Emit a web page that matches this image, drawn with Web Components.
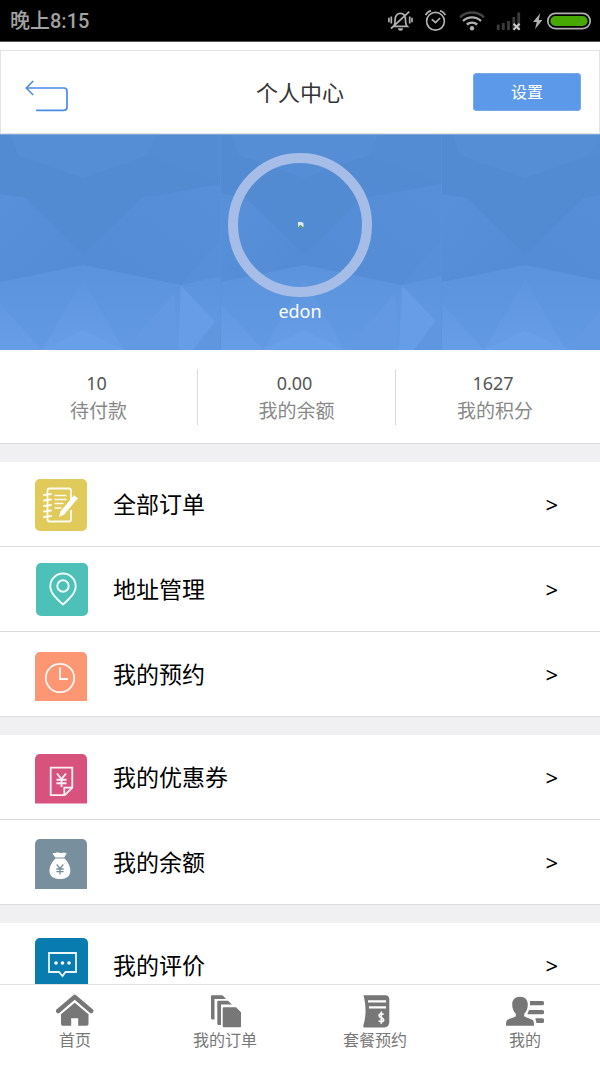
<!DOCTYPE html>
<html lang="zh-CN">
<head>
<meta charset="utf-8">
<meta name="viewport" content="width=device-width, initial-scale=1">
<title>个人中心</title>
<style>
  html, body { margin: 0; height: 100%; }
  body {
    font-family: "Noto Sans", "Noto Sans CJK SC", sans-serif;
    color: #000;
    background: #fff;
    --blue: #5d99e9;
    --line: #dcdcdc;
    --band: #f0f0f2;
  }
</style>
</head>
<body>
<app-shell>
  <status-bar slot="top" time="晚上8:15"></status-bar>
  <page-header heading="个人中心" action="设置"></page-header>
  <profile-hero name="edon"></profile-hero>
  <stat-row>
    <stat-item value="10">待付款</stat-item>
    <stat-item value="0.00">我的余额</stat-item>
    <stat-item value="1627">我的积分</stat-item>
  </stat-row>
  <menu-group>
    <menu-row icon="orders">全部订单</menu-row>
    <menu-row icon="address">地址管理</menu-row>
    <menu-row icon="booking">我的预约</menu-row>
  </menu-group>
  <menu-group>
    <menu-row icon="coupon">我的优惠券</menu-row>
    <menu-row icon="balance">我的余额</menu-row>
  </menu-group>
  <menu-group>
    <menu-row icon="review">我的评价</menu-row>
  </menu-group>
  <tab-bar slot="bottom">
    <tab-item icon="home">首页</tab-item>
    <tab-item icon="files">我的订单</tab-item>
    <tab-item icon="bill">套餐预约</tab-item>
    <tab-item icon="user">我的</tab-item>
  </tab-bar>
</app-shell>

<script>
const define = (name, render) => customElements.define(name, class extends HTMLElement {
  connectedCallback() {
    if (this.shadowRoot) return;
    this.attachShadow({ mode: 'open' }).innerHTML = render(this);
  }
});

define('app-shell', () => `
  <style>
    :host { display: flex; flex-direction: column; height: 100vh; }
    main { flex: 1; min-height: 0; overflow-y: auto; scrollbar-width: none; }
  </style>
  <slot name="top"></slot>
  <main><slot></slot></main>
  <slot name="bottom"></slot>`);

define('status-bar', el => `
  <style>
    :host { display: flex; align-items: center; justify-content: space-between; flex: none;
      height: 41px; padding: 0 8px 0 10px; background: #000; color: #a2a2a2;
      border-bottom: 1px solid #555; }
    time { font: 500 20px/28px Roboto, "Noto Sans CJK SC", sans-serif; }
    svg { display: block; }
  </style>
  <time>${el.getAttribute('time')}</time>
  <svg width="204" height="24" viewBox="0 0 204 24" fill="none" stroke="#b0b0b0" stroke-width="1.7" aria-hidden="true">
    <path d="M5.5 17.3c1.4-1.3 1.6-3 1.6-6.500 0-4 2.200-6.400 5.200-6.400s5.200 2.400 5.200 6.400c0 3.500.2 5.200 1.700 6.500zM3 19.500L21.300 2.700M3.300 7.500v7M.9 8.800v4.400M21.700 7.500v7M24 8.800v4.400"/>
    <path d="M10 19.300h5a2.500 2.500 0 0 1-5 0z" fill="#b0b0b0" stroke="none"/>
    <circle cx="47.500" cy="12.300" r="8.900"/>
    <path d="M43.800 10.300l3.700 3.200 4.600-4.500M37.600 6.200c1-2.200 2.800-3.800 5.400-4.600M57.400 6.200c-1-2.200-2.800-3.800-5.400-4.600"/>
    <path d="M72 8.300a17.500 17.500 0 0 1 24 0" stroke="#444" stroke-width="2.400"/>
    <path d="M75 12a13 13 0 0 1 18 0M78.800 15.500a8 8 0 0 1 10.400 0" stroke-width="2.400"/>
    <circle cx="84" cy="19.300" r="2.200" fill="#b0b0b0" stroke="none"/>
    <path d="M110.200 21v-5.500M115.300 21v-7M120.500 21v-9M125.800 21V8M130.700 21V3.500" stroke="#3b3b3b" stroke-width="2.800"/>
    <path d="M125.600 14.800l6 6M131.600 14.800l-6 6" stroke="#ccc" stroke-width="2"/>
    <path d="M152.300 4.300l-7.300 8.700h3.800l-1.800 7.300 7.400-9.300h-3.700z" fill="#b0b0b0" stroke="none"/>
    <rect x="159.800" y="4.400" width="42.400" height="15.200" rx="7.600"/>
    <rect x="162.400" y="7" width="37.200" height="10" rx="5" fill="#47a804" stroke="none"/>
  </svg>`);

define('page-header', el => `
  <style>
    :host { display: block; padding-top: 8px; background: #fff; }
    header { display: grid; grid-template-columns: 1fr auto 1fr; align-items: center;
      height: 82px; padding: 0 18px; border: 1px solid #e3e3e3; }
    a, svg { display: block; }
    a { justify-self: start; }
    h1 { margin: 0; font-size: 22px; line-height: 32px; font-weight: 400; color: #333; }
    button { justify-self: end; width: 108px; height: 38px; padding: 0; border: 1px solid #78abed;
      border-radius: 3px; background: var(--blue); color: #fff; font: inherit; font-size: 16px; line-height: 24px; }
  </style>
  <header>
    <a href="#back" aria-label="返回">
      <svg width="52" height="40" viewBox="0 0 52 40" fill="none" stroke="#4a8be6" stroke-width="1.700" stroke-linecap="round" stroke-linejoin="round">
        <path d="M13.700 9.500L7.200 16l6.500 6.500M7.200 16H45a3 3 0 0 1 3 3v16.300a3 3 0 0 1-3 3H17.800"/>
      </svg>
    </a>
    <h1>${el.getAttribute('heading')}</h1>
    <button type="button">${el.getAttribute('action')}</button>
  </header>`);

define('profile-hero', el => `
  <style>
    :host { display: flex; flex-direction: column; align-items: center; position: relative;
      padding: 19px 0 25px; background: #538cd4; color: #fff; }
    .facets { position: absolute; inset: 0; width: 100%; height: 100%; }
    .avatar { position: relative; box-sizing: border-box; display: grid; place-items: center;
      width: 144px; height: 144px; border: 10px solid #a5bde7; border-radius: 50%; }
    .name { position: relative; font-size: 18px; line-height: 28px; }
  </style>
  <svg class="facets" aria-hidden="true">
    <defs>
      <linearGradient id="low" x1="0" y1="0" x2="0" y2="1"><stop offset="0" stop-color="#5b94dd"/><stop offset="1" stop-color="#6199e2"/></linearGradient>
      <linearGradient id="left" x1="0" y1="0" x2="1" y2="1"><stop offset="0" stop-color="#5891da"/><stop offset="1" stop-color="#538cd5"/></linearGradient>
      <linearGradient id="right" x1="1" y1="0" x2="0" y2="1"><stop offset="0" stop-color="#5790d9"/><stop offset="1" stop-color="#538cd5"/></linearGradient>
      <linearGradient id="spike" x1="0" y1="0" x2="0" y2="1"><stop offset="0" stop-color="#5e96df"/><stop offset="1" stop-color="#669de6"/></linearGradient>
      <pattern id="tile" width="221" height="216" patternUnits="userSpaceOnUse">
        <rect width="221" height="216" fill="#538bd3"/>
        <path d="M11 0H157L148 21 83 44 18 21z" fill="#568ed6"/>
        <path d="M157 0H221V49L148 21z" fill="#548cd4"/>
        <path d="M0 60L25 64 83 121V131L0 148z" fill="url(#left)"/>
        <path d="M221 50L142 64 83 121V131L181 151 221 142z" fill="url(#right)"/>
        <path d="M221 105L181 151 221 142z" fill="#5790d9"/>
        <path d="M0 148L83 131 181 151 221 142V216H0z" fill="url(#low)"/>
        <path d="M0 170L42 216H0zM83 146L124 216 83 196 42 216z" fill="url(#spike)"/>
        <path d="M42 216L83 196 124 216z" fill="#689fe8"/>
        <path d="M124 216L174 160 178 216z" fill="#6299e2"/>
        <path d="M181 152L215 187 193 216H178z" fill="#669de6"/>
        <path d="M215 187L221 192V216H193z" fill="#5f96de"/>
        <path d="M220.500 0V216" stroke="#5b93da" stroke-opacity=".7"/>
      </pattern>
    </defs>
    <rect width="100%" height="100%" fill="url(#tile)"/>
    <rect width="100%" height="1" fill="#7ca8df"/>
  </svg>
  <div class="avatar">
    <svg width="8" height="8" viewBox="0 0 8 8" role="img" aria-label="头像">
      <path d="M2 1h4l1.500 1.500V6H2z" fill="#dfe9f4"/><path d="M2 5l3-1 2.500 3H5z" fill="#55a04c"/>
    </svg>
  </div>
  <div class="name">${el.getAttribute('name')}</div>`);

define('stat-row', () => `
  <style>
    :host { display: flex; padding: 19px 0 18px; background: #fff; border-bottom: 1px solid var(--line); }
    ::slotted(*) { flex: 0 0 33%; }
    ::slotted(:not(:last-child)) { border-right: 1px solid var(--line); }
  </style>
  <slot></slot>`);

define('stat-item', el => `
  <style>
    :host { display: block; box-sizing: border-box; text-align: center; line-height: 28px; }
    .value { padding-right: 4px; font-size: 18px; color: #555; }
    .label { font-size: 19px; color: #888; }
  </style>
  <div class="value">${el.getAttribute('value')}</div>
  <div class="label"><slot></slot></div>`);

define('menu-group', () => `
  <style>
    :host { display: block; border-top: 18px solid var(--band); background: #fff; }
  </style>
  <slot></slot>`);

const line = 'fill="none" stroke="#fff" stroke-opacity=".92"';
const menuIcons = {
  orders: `<path d="M5 2h42a5 5 0 0 1 5 5v42a5 5 0 0 1-5 5H5a5 5 0 0 1-5-5V7a5 5 0 0 1 5-5z" fill="#e0ca59"/>
    <path d="M36 23V13.500a2 2 0 0 0-2-2H14.500a2 2 0 0 0-2 2v29a2 2 0 0 0 2 2H34a2 2 0 0 0 2-2V33" ${line} stroke-width="1.800"/>
    <path d="M9 18l7-1M9 23.500l7-1M9 29l7-1M9 34.500l7-1M9 40l7-1" ${line} stroke-width="1.900" stroke-linecap="round"/>
    <path d="M19.500 18.500h12M19.500 22.500h12M19.500 26.500h9M19.500 31h7" ${line} stroke-width="1.700"/>
    <path d="M39 18.200l4 3-14 16.500-5 2.300 1.500-5.500z" fill="#fff"/>`,
  address: `<rect x="1" y="1" width="52" height="53" rx="5" fill="#4dc1b7"/>
    <path d="M28 42.500C22.500 37.500 15.300 31.500 15.300 24.200a12.700 12.700 0 0 1 25.400 0C40.700 31.500 33.500 37.500 28 42.500z" ${line} stroke-width="1.900" stroke-linejoin="round"/>
    <circle cx="28" cy="24" r="5.700" ${line} stroke-width="2"/>`,
  booking: `<path d="M5 5h42a5 5 0 0 1 5 5v44H0V10a5 5 0 0 1 5-5z" fill="#fd9672"/>
    <circle cx="25" cy="31" r="14.200" ${line} stroke-width="1.800"/><path d="M25 20.500V32h8" ${line} stroke-width="1.800"/>`,
  coupon: `<path d="M5 4h42a5 5 0 0 1 5 5v44.500H0V9a5 5 0 0 1 5-5z" fill="#d8527e"/>
    <path d="M15.700 17.700h21.600v20l-7.500 7.500H15.700zM37.300 37.700h-8v7.500" ${line} stroke-width="1.800"/>
    <path d="M22 23.500l4.500 5.500 4.500-5.500M26.500 29v8M21.500 29.700h10M21.500 33.200h10" ${line} stroke-width="1.900"/>`,
  balance: `<path d="M5 4h42a5 5 0 0 1 5 5v45H0V9a5 5 0 0 1 5-5z" fill="#78909d"/>
    <path d="M17.500 18.500c1.500-1.500 2.500.4 3.700-.8 1.200-1 2 .3 3.300 0 1.200-.3 2.200.8 3.500 0 1.200-.8 2.400.8 3.800.2l-2.500 4.600h-9z" fill="#fff"/>
    <path d="M20.500 23.500h9c3.200 3 5.800 7.500 5.800 12.200 0 5.300-3.800 8.300-10.300 8.300s-10.500-3-10.500-8.300c0-4.700 2.800-9.200 6-12.200z" fill="#fff"/>
    <path d="M21.700 29.500l3.300 4 3.300-4M25 33.500v6M21.300 34h7.400M21.300 36.700h7.400" fill="none" stroke="#78909d" stroke-width="1.300"/>`,
  review: `<path d="M5 0h43a5 5 0 0 1 5 5v49H0V5a5 5 0 0 1 5-5z" fill="#087baf"/>
    <path d="M14 15h27v19H30.500L27.500 38l-3.500-4H14z" ${line} stroke-width="1.800"/>
    <g fill="#fff"><circle cx="21" cy="25" r="1.800"/><circle cx="27.500" cy="25" r="1.800"/><circle cx="34" cy="25" r="1.800"/></g>`
};

define('menu-row', el => `
  <style>
    :host { display: block; border-bottom: 1px solid var(--line); }
    a { display: flex; align-items: center; gap: 24px; height: 84px; padding: 0 42px 0 35px;
      color: inherit; text-decoration: none; font-size: 23px; line-height: 32px; }
    svg { display: block; flex: none; }
    .label { flex: 1; }
    .more { font-size: 22px; }
  </style>
  <a href="#${el.getAttribute('icon')}">
    <svg width="54" height="54" viewBox="0 0 54 54" aria-hidden="true">${menuIcons[el.getAttribute('icon')]}</svg>
    <span class="label"><slot></slot></span>
    <span class="more">&gt;</span>
  </a>`);

define('tab-bar', () => `
  <style>
    :host { display: grid; grid-auto-flow: column; grid-auto-columns: 1fr; flex: none;
      padding: 9px 0 15px; background: #fff; border-top: 1px solid #e2e2e2; }
  </style>
  <slot></slot>`);

const tabIcons = {
  home: `<path d="M3.200 17L19.700 2.800 36.200 17" fill="none" stroke="#777" stroke-width="4.400" stroke-linecap="round" stroke-linejoin="round"/>
    <path d="M6 20.200L19.700 8.800 33.500 20.200v9.800a1.700 1.700 0 0 1-1.700 1.700h-8.600v-7.400h-7v7.400H7.700A1.700 1.700 0 0 1 6 30z"/>`,
  files: `<path d="M6 2.300a1 1 0 0 1 1-1h10.500L21 5H9.500v20.500h-2A1.500 1.500 0 0 1 6 24z"/>
    <path d="M12.300 7.700a1 1 0 0 1 1-1h9.700l4 3.700H16V31h-2.200a1.500 1.500 0 0 1-1.500-1.500z"/>
    <path d="M18.700 13.300H31l5 5v14a1 1 0 0 1-1 1H18.700a1 1 0 0 1-1-1v-18a1 1 0 0 1 1-1z"/>`,
  bill: `<path d="M8.500 1.300h22c2.500 0 3.800 1.700 3.800 4v22.500c0 3.500-1.800 5.700-5 5.700H9.800c-1.400 0-1.800-.8-1.400-2.200C11 23 11.500 13 8.500 1.300z"/>
    <path d="M13 7.300h18M14 13.300h17" stroke="#fff" stroke-width="2.300" fill="none"/>
    <path d="M28.600 20.700c-.8-1.300-4.600-1.300-4.600.9 0 2.600 4.700 1.500 4.700 4.200 0 2.400-4.200 2.300-5 .7M26.300 17.500v12.300" fill="none" stroke="#fff" stroke-width="1.600"/>`,
  user: `<path d="M15 2.700c5 0 7.800 3 7.800 7.800 0 4-1.300 7-3.600 9.300v2.400c2.400 1.700 6.300 2.300 8.200 3.600 1.300.9 1.600 2.200 1.600 5.900H1c0-3.700.3-5 1.600-5.900 1.900-1.300 5.800-1.900 8.200-3.600v-2.400C8.500 17.500 7.200 14.500 7.200 10.500c0-4.800 2.800-7.800 7.800-7.800z"/>
    <path d="M25 7h12.500a1.500 1.500 0 0 1 1.500 1.500v1.300a1.500 1.500 0 0 1-1.500 1.500H25zM24 16h13.500a1.500 1.500 0 0 1 1.500 1.500v1.200a1.500 1.500 0 0 1-1.500 1.500H22.300zM30.300 24.200h7.200a1.500 1.500 0 0 1 1.500 1.500v1.800a1.500 1.500 0 0 1-1.500 1.500H31.500z"/>`
};

define('tab-item', el => `
  <style>
    :host { display: block; }
    a { display: flex; flex-direction: column; align-items: center; color: #777;
      text-decoration: none; font-size: 16px; line-height: 24px; }
    svg { display: block; fill: #777; }
  </style>
  <a href="#${el.getAttribute('icon')}">
    <svg width="40" height="34" viewBox="0 0 40 34" aria-hidden="true">${tabIcons[el.getAttribute('icon')]}</svg>
    <span><slot></slot></span>
  </a>`);
</script>
</body>
</html>
